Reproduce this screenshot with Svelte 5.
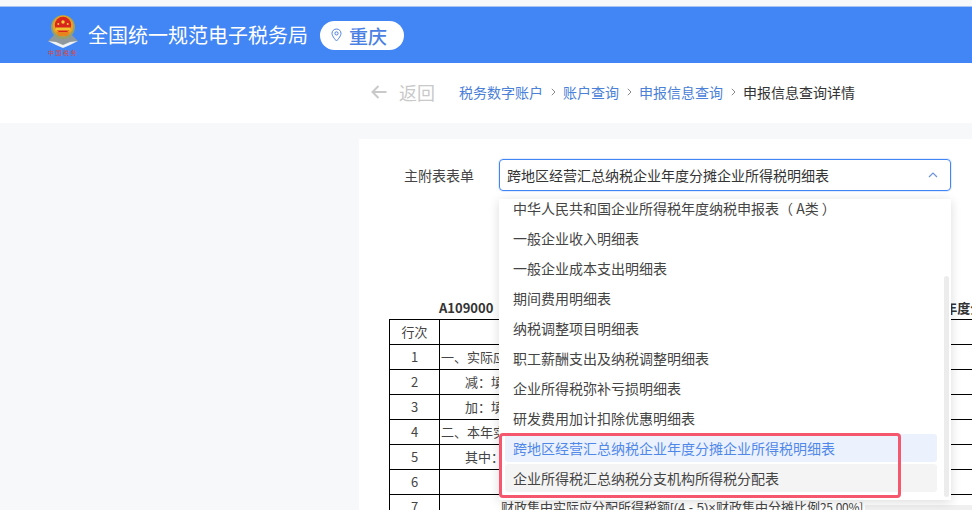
<script>
  const crumbs = ['税务数字账户', '账户查询', '申报信息查询'];

  const options = [
    '中华人民共和国企业所得税年度纳税申报表（ A类 ）',
    '一般企业收入明细表',
    '一般企业成本支出明细表',
    '期间费用明细表',
    '纳税调整项目明细表',
    '职工薪酬支出及纳税调整明细表',
    '企业所得税弥补亏损明细表',
    '研发费用加计扣除优惠明细表',
    '跨地区经营汇总纳税企业年度分摊企业所得税明细表',
    '企业所得税汇总纳税分支机构所得税分配表',
  ];
  const selected = options[8];
  const hovered = options[9];

  const rows = [
    { no: 1, text: '一、实际应纳所得税额', indent: 0 },
    { no: 2, text: '减：填报境外所得应纳所得税额', indent: 1 },
    { no: 3, text: '加：填报境外所得抵免所得税额', indent: 1 },
    { no: 4, text: '二、本年实际应纳所得税额', indent: 0 },
    { no: 5, text: '其中：总机构分摊所得税额', indent: 1 },
    { no: 6, text: '', indent: 0 },
  ];
</script>

<div class="page">
  <header class="topbar">
    <div class="logo">
      <svg width="32" height="33" viewBox="0 0 32 33" aria-hidden="true">
        <path d="M1 26 L8 19 L24 19 L31 26 L24 28 L16 32 L8 28 Z" fill="#8f989c" />
        <path d="M1 26 L9 27 L16 30 L23 27 L31 26 L23 30 L16 33 L9 30 Z" fill="#f0f3f5" />
        <circle cx="16" cy="12" r="12" fill="#97a06c" />
        <circle cx="16" cy="11" r="10.4" fill="#e9a21f" />
        <circle cx="16" cy="10" r="8.2" fill="#d8261f" />
        <rect x="8.5" y="12.5" width="15" height="3" fill="#f2c230" />
        <path d="M9 17 H23 L20.5 21 H11.5 Z" fill="#e8841e" />
        <circle cx="16" cy="7" r="1.7" fill="#f6d23a" />
        <circle cx="11.3" cy="9" r="1" fill="#f6d23a" />
        <circle cx="20.7" cy="9" r="1" fill="#f6d23a" />
      </svg>
      <span class="logo-text">中国税务</span>
    </div>
    <span class="site-name">全国统一规范电子税务局</span>
    <span class="region">
      <svg width="11" height="14" viewBox="0 0 11 14" aria-hidden="true">
        <path d="M5.5 1 C2.9 1 1 3 1 5.4 C1 8.4 5.5 13 5.5 13 C5.5 13 10 8.4 10 5.4 C10 3 8.1 1 5.5 1 Z" fill="none" stroke="#4a80e4" stroke-width="1" />
        <circle cx="5.5" cy="5.4" r="1.6" fill="none" stroke="#4a80e4" stroke-width="1" />
      </svg>
      重庆
    </span>
  </header>

  <nav class="subbar">
    <span class="back">
      <svg width="16" height="14" viewBox="0 0 16 14" aria-hidden="true">
        <path d="M15.5 7 H1.5 M7.5 1 L1.5 7 L7.5 13" fill="none" stroke="#c9c9c9" stroke-width="2" />
      </svg>
      <span>返回</span>
    </span>
    <div class="crumbs">
      {#each crumbs as crumb}
        <span class="crumb">{crumb}</span>
        <svg class="sep" width="5" height="8" viewBox="0 0 5 8" aria-hidden="true">
          <path d="M0.8 0.8 L4 4 L0.8 7.2" fill="none" stroke="#888" stroke-width="1" />
        </svg>
      {/each}
      <span class="current">申报信息查询详情</span>
    </div>
  </nav>

  <main class="content">
    <aside class="side"></aside>
    <section class="card">
      <div class="form-row">
        <span class="label">主附表表单</span>
        <div class="select">
          <span>{selected}</span>
          <svg width="10" height="6" viewBox="0 0 10 6" aria-hidden="true">
            <path d="M1 5 L5 1 L9 5" fill="none" stroke="#6f93d8" stroke-width="1.2" />
          </svg>

          <div class="dropdown">
            <ul>
              {#each options as opt}
                <li class:selected={opt === selected} class:hovered={opt === hovered}>{opt}</li>
              {/each}
            </ul>
            <div class="thumb"></div>
            <div class="callout"></div>
          </div>
        </div>
      </div>

      <div class="sheet">
        <p class="sheet-title"><b>A109000</b><b class="sheet-name">跨地区经营汇总纳税企业年度分摊企业所得税明细表</b></p>
        <table>
          <tbody>
            <tr>
              <td class="no">行次</td>
              <td class="item"></td>
            </tr>
            {#each rows as row}
              <tr>
                <td class="no">{row.no}</td>
                <td class="item" class:in1={row.indent === 1}>{row.text}</td>
              </tr>
            {/each}
            <tr>
              <td class="no">7</td>
              <td class="item in2">财政集中实际应分配所得税额<span class="formula">[(4 - 5)×</span>财政集中分摊比例<span class="ratio">25.00%]</span><span class="faded"></span></td>
            </tr>
          </tbody>
        </table>
      </div>
    </section>
  </main>
</div>

<style>
  :global(body) {
    margin: 0;
  }

  .page {
    width: 972px;
    height: 510px;
    overflow: hidden;
    display: flex;
    flex-direction: column;
    background: #f7f8fa;
    font-family: "Noto Sans CJK SC", "Noto Sans", sans-serif;
    color: #333;
  }

  .topbar {
    margin-top: 6px;
    height: 56px;
    flex: none;
    display: flex;
    align-items: center;
    padding-left: 47px;
    background: #4285f4;
    border-top: 1px solid #a9c4f2;
  }

  .logo {
    width: 32px;
    display: flex;
    flex-direction: column;
    align-items: center;
    margin-right: 9px;
    margin-top: 2px;
  }

  .logo svg {
    display: block;
  }

  .logo-text {
    font-size: 6px;
    line-height: 9px;
    letter-spacing: 1.5px;
    color: #d9453a;
    white-space: nowrap;
  }

  .site-name {
    font-size: 20px;
    line-height: 30px;
    color: #fff;
    white-space: nowrap;
  }

  .region {
    margin-left: 12px;
    height: 29px;
    width: 84px;
    box-sizing: border-box;
    padding-left: 11px;
    display: flex;
    align-items: center;
    gap: 7px;
    border-radius: 15px;
    background: #fff;
    color: #4a80e4;
    font-size: 19px;
    font-weight: 500;
  }

  .subbar {
    height: 60px;
    box-sizing: border-box;
    padding: 0 0 2px 371px;
    flex: none;
    display: flex;
    align-items: center;
    background: #fff;
  }

  .back {
    display: flex;
    align-items: center;
    gap: 12px;
    font-size: 18px;
    color: #c9c9c9;
    margin-right: 24px;
  }

  .crumbs {
    display: flex;
    align-items: center;
    font-size: 14px;
    white-space: nowrap;
  }

  .crumb {
    color: #4a80d8;
  }

  .current {
    color: #333;
  }

  .sep {
    margin: 0 7.5px;
  }

  .content {
    flex: 1;
    display: flex;
    padding-top: 16px;
    min-height: 0;
  }

  .side {
    width: 359px;
    flex: none;
  }

  .card {
    flex: 1;
    min-width: 0;
    background: #fff;
    padding: 20px 0 0 30px;
  }

  .form-row {
    display: flex;
    align-items: center;
    padding-left: 15px;
  }

  .label {
    width: 95px;
    font-size: 14px;
    color: #444;
  }

  .select {
    position: relative;
    width: 452px;
    height: 32px;
    box-sizing: border-box;
    display: flex;
    align-items: center;
    justify-content: space-between;
    padding: 0 12px 0 7px;
    border: 1px solid #4285f4;
    border-radius: 4px;
    box-shadow: 0 0 0 1px rgb(66 133 244 / 15%);
    font-size: 14px;
    color: #333;
    white-space: nowrap;
  }

  .dropdown {
    position: absolute;
    z-index: 2;
    top: 39px;
    left: -1px;
    width: 452px;
    height: 301px;
    background: #fff;
    box-shadow: 0 2px 10px rgb(0 0 0 / 14%);
    overflow: hidden;
  }

  .dropdown ul {
    list-style: none;
    margin: -5px 0 0;
    padding: 0 14px 0 6px;
    display: flex;
    flex-direction: column;
    gap: 2px;
  }

  .dropdown li {
    height: 28px;
    line-height: 28px;
    padding-left: 8px;
    border-radius: 3px;
    font-size: 14px;
    color: #444;
  }

  .dropdown li.selected {
    background: #ecf2fd;
    color: #5088ea;
  }

  .dropdown li.hovered {
    background: #f4f4f4;
  }

  .thumb {
    position: absolute;
    top: 77px;
    right: 2px;
    width: 5px;
    height: 221px;
    background: #ececec;
    border-radius: 3px;
  }

  .callout {
    position: absolute;
    top: 234px;
    left: 0;
    width: 402px;
    height: 65px;
    box-sizing: border-box;
    border: 3px solid #f5576f;
    border-radius: 4px;
    pointer-events: none;
  }

  .sheet {
    margin-top: 108px;
  }

  .sheet-title {
    margin: 0 0 3px 50px;
    font-size: 13px;
    line-height: 17px;
    white-space: nowrap;
  }

  .sheet-name {
    margin-left: 308px;
  }

  table {
    border-collapse: collapse;
    table-layout: fixed;
    width: 900px;
    font-size: 13px;
    color: #444;
  }

  td {
    height: 23px;
    padding: 0 0 1px;
    border: 1px solid #000;
    white-space: nowrap;
    overflow: hidden;
  }

  .no {
    width: 49px;
    text-align: center;
  }

  .item {
    padding-left: 1px;
  }

  .in1 {
    padding-left: 25px;
  }

  .in2 {
    padding-left: 61px;
  }

  .formula {
    font-family: "Liberation Sans", sans-serif;
  }

  .ratio {
    font-size: 12px;
    letter-spacing: -0.3px;
  }

  .faded {
    display: inline-block;
    width: 112px;
    height: 7px;
    margin-left: 2px;
    background: #f0f0f0;
  }
</style>
